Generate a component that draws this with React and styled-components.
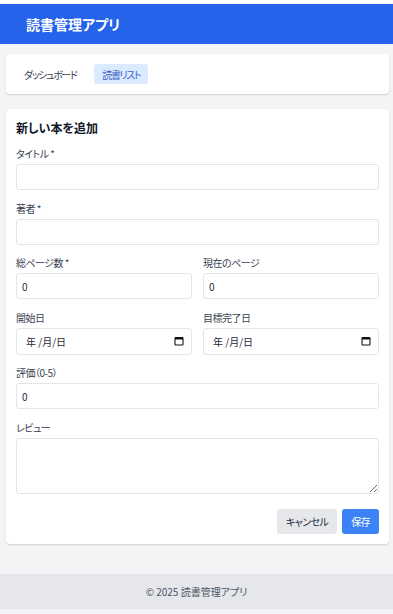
import React from "react";
import styled, { createGlobalStyle } from "styled-components";

const GlobalStyle = createGlobalStyle`
  html, body {
    margin: 0;
    padding: 0;
    background: #ffffff;
  }
  body {
    padding-top: 4px;
    font-family: "Noto Sans CJK JP", "Noto Sans", sans-serif;
    font-feature-settings: "palt";
    color: #1f2937;
  }
  * {
    box-sizing: border-box;
  }
`;

const Page = styled.div`
  min-height: calc(100vh - 4px);
  background: #f3f4f6;
  display: flex;
  flex-direction: column;
`;

const Header = styled.header`
  height: 40px;
  background: #2563eb;
  display: flex;
  align-items: center;
  padding: 0 26px;
`;

const AppTitle = styled.h1`
  margin: 0;
  font-size: 14px;
  font-weight: 700;
  color: #ffffff;
`;

const Main = styled.main`
  padding: 10px 4px 30px 6px;
  display: flex;
  flex-direction: column;
  gap: 15px;
`;

const Card = styled.section`
  background: #ffffff;
  border-radius: 4px;
  box-shadow: 0 1px 2px rgba(0, 0, 0, 0.12), 0 1px 1px rgba(0, 0, 0, 0.04);
  padding: 10px;
`;

const Nav = styled(Card)`
  display: flex;
  align-items: center;
  gap: 10px;
`;

const NavItem = styled.button`
  border: none;
  border-radius: 3px;
  height: 20px;
  padding: 0 8px;
  font-family: inherit;
  font-feature-settings: "palt";
  font-size: 10px;
  letter-spacing: -1.4px;
  cursor: pointer;
  background: ${(p) => (p.$active ? "#dbeafe" : "transparent")};
  color: ${(p) => (p.$active ? "#3b63c9" : "#374151")};
`;

const FormTitle = styled.h2`
  margin: 0 0 9px;
  font-size: 12px;
  line-height: 18px;
  font-weight: 600;
  color: #111827;
`;

const Fields = styled.div`
  display: flex;
  flex-direction: column;
  gap: 10.6px;
`;

const Row = styled.div`
  display: grid;
  grid-template-columns: 1fr 1fr;
  gap: 11px;
`;

const Field = styled.div`
  display: flex;
  flex-direction: column;
`;

const Label = styled.label`
  font-size: 10px;
  line-height: 15px;
  margin-bottom: 3px;
  letter-spacing: -0.5px;
  color: #374151;
`;

const Input = styled.input`
  height: 26px;
  width: 100%;
  border: 1px solid #e3e5e9;
  border-radius: 3px;
  padding: 0 5px;
  font-family: inherit;
  font-size: 10px;
  color: #1f2937;
  background: #ffffff;
  outline: none;
`;

const DateBox = styled.div`
  height: 27px;
  border: 1px solid #e3e5e9;
  border-radius: 3px;
  padding: 0 7px 0 9px;
  display: flex;
  align-items: center;
  justify-content: space-between;
  font-size: 10px;
  color: #1f2937;
  background: #ffffff;
`;

const TextArea = styled.textarea`
  height: 56px;
  width: 100%;
  border: 1px solid #e3e5e9;
  border-radius: 3px;
  padding: 5px;
  font-family: inherit;
  font-size: 10px;
  outline: none;
  display: block;
`;

const Actions = styled.div`
  display: flex;
  justify-content: flex-end;
  gap: 5px;
  margin-top: 15px;
`;

const Button = styled.button`
  height: 25px;
  border: none;
  border-radius: 3px;
  padding: 0 9px;
  font-family: inherit;
  font-feature-settings: "palt";
  font-size: 10px;
  letter-spacing: -0.6px;
  cursor: pointer;
  background: ${(p) => (p.$primary ? "#3b82f6" : "#e5e7eb")};
  color: ${(p) => (p.$primary ? "#ffffff" : "#1f2937")};
`;

const Footer = styled.footer`
  height: 35px;
  background: #e5e7eb;
  display: flex;
  align-items: center;
  justify-content: center;
  font-size: 10px;
  color: #4b5563;
`;

const CalendarIcon = () => (
  <svg width="10" height="10" viewBox="0 0 10 10">
    <rect x="1" y="1.5" width="8" height="7.5" rx="0.8" fill="none" stroke="#111" strokeWidth="1.1" />
    <rect x="1" y="1.5" width="8" height="2" fill="#111" />
  </svg>
);

const DateField = () => (
  <DateBox>
    <span>年 /月/日</span>
    <CalendarIcon />
  </DateBox>
);

export default function App() {
  return (
    <>
      <GlobalStyle />
      <Page>
        <Header>
          <AppTitle>読書管理アプリ</AppTitle>
        </Header>
        <Main>
          <Nav as="nav">
            <NavItem>ダッシュボード</NavItem>
            <NavItem $active>読書リスト</NavItem>
          </Nav>
          <Card>
            <FormTitle>新しい本を追加</FormTitle>
            <Fields>
              <Field>
                <Label>タイトル *</Label>
                <Input type="text" />
              </Field>
              <Field>
                <Label>著者 *</Label>
                <Input type="text" />
              </Field>
              <Row>
                <Field>
                  <Label>総ページ数 *</Label>
                  <Input type="number" defaultValue={0} />
                </Field>
                <Field>
                  <Label>現在のページ</Label>
                  <Input type="number" defaultValue={0} />
                </Field>
              </Row>
              <Row>
                <Field>
                  <Label>開始日</Label>
                  <DateField />
                </Field>
                <Field>
                  <Label>目標完了日</Label>
                  <DateField />
                </Field>
              </Row>
              <Field>
                <Label>評価（0-5）</Label>
                <Input type="number" defaultValue={0} />
              </Field>
              <Field>
                <Label>レビュー</Label>
                <TextArea />
              </Field>
            </Fields>
            <Actions>
              <Button>キャンセル</Button>
              <Button $primary>保存</Button>
            </Actions>
          </Card>
        </Main>
        <Footer>© 2025 読書管理アプリ</Footer>
      </Page>
    </>
  );
}
